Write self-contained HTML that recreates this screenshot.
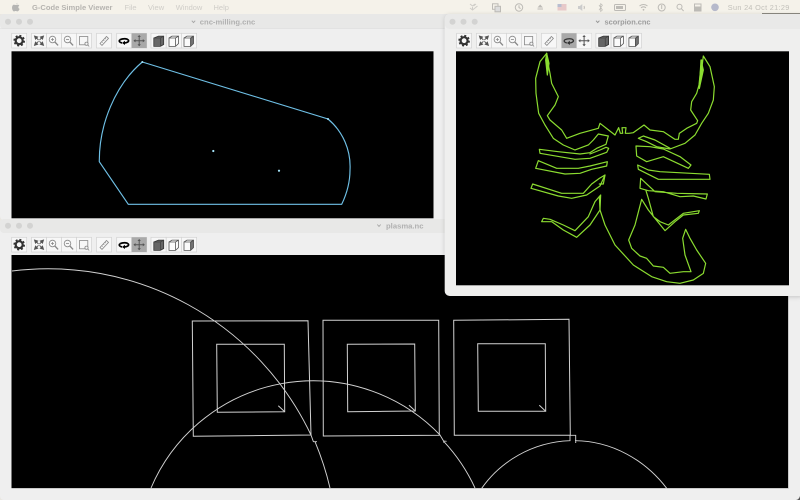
<!DOCTYPE html>
<html><head><meta charset="utf-8"><style>
html,body{margin:0;padding:0;width:800px;height:500px;overflow:hidden;background:#e9e7e2}
svg{position:absolute;left:0;top:0;filter:blur(.35px)}
text{font-family:"Liberation Sans",sans-serif}
</style></head><body>
<svg width="800" height="500" viewBox="0 0 800 500" xmlns="http://www.w3.org/2000/svg">
<defs>
<filter id="sh" x="-5%" y="-5%" width="110%" height="115%"><feDropShadow dx="0" dy="1" stdDeviation="2" flood-color="#000" flood-opacity=".18"/></filter>
<g id="tb">
 <g fill="#f7f7f7" stroke="#d2d2d2" stroke-width=".7">
  <rect x="11.7" y="33.3" width="15" height="14.7"/>
  <rect x="31.5" y="33.3" width="15" height="14.7"/><rect x="46.5" y="33.3" width="15" height="14.7"/><rect x="61.5" y="33.3" width="15" height="14.7"/><rect x="76.5" y="33.3" width="15" height="14.7"/>
  <rect x="96.5" y="33.3" width="15" height="14.7"/>
  <rect x="116.7" y="33.3" width="15" height="14.7"/><rect x="131.7" y="33.3" width="15" height="14.7"/>
  <rect x="151" y="33.3" width="15.2" height="14.7"/><rect x="166.2" y="33.3" width="15.2" height="14.7"/><rect x="181.4" y="33.3" width="15.2" height="14.7"/>
 </g>
 <circle cx="19.2" cy="40.7" r="3.5" fill="none" stroke="#333" stroke-width="2.2"/>
 <circle cx="19.2" cy="40.7" r="5" fill="none" stroke="#333" stroke-width="1.6" stroke-dasharray="2 1.93"/>
 <g fill="#555" stroke="#555" stroke-width=".9">
  <path d="M34.5 36l3.2 1-2.2 2.2zM43.5 36l-3.2 1 2.2 2.2zM34.5 45.3l3.2-1-2.2-2.2zM43.5 45.3l-3.2-1 2.2-2.2z"/>
  <path d="M36 37.5l2.5 2.5M42 37.5l-2.500 2.500M36 43.800l2.500-2.500M42 43.800l-2.500-2.500" fill="none"/>
 </g>
 <g fill="none" stroke="#888" stroke-width=".8">
  <circle cx="52.5" cy="39.5" r="3.3"/><path d="M54.900 42l3.200 3.400" stroke-width="1.3"/><path d="M51 39.500h3M52.500 38v3"/>
  <circle cx="67.5" cy="39.5" r="3.3"/><path d="M69.900 42l3.200 3.400" stroke-width="1.3"/><path d="M66 39.500h3"/>
  <rect x="79.5" y="36.5" width="8.3" height="8.3"/><circle cx="86.5" cy="43.7" r="1.6" fill="#f7f7f7"/><path d="M87.700 45l1.500 1.400"/>
  <path d="M100 43.500l6.500-7 2 1.900-6.500 7z"/><path d="M101.700 41.700l1 .9M103.300 40l1 .9M105 38.200l1 .9" stroke-width=".6"/>
 </g>
 <use href="#rotB"/>
 <g fill="none" stroke="#333" stroke-width=".8">
  <path d="M153.800 38l4.700-1.900h5.200v8.400l-3.300 1.900h-6.600z" fill="#666"/><path d="M153.800 38h6.600v8.400M160.400 38l3.300-1.900" stroke="#444"/>
  <path d="M169 38l3-1.900h6.500v7.500l-3 2.800H169z" fill="#fbfbfb" stroke="#555"/><path d="M169 38h6.500v8.400M175.500 38l3-1.900" stroke="#555"/>
  <path d="M184 38l3-1.900h6.500v7.500l-3 2.800H184z" fill="#fbfbfb" stroke="#555"/><path d="M184 38h6.500v8.400M190.500 38l3-1.900" stroke="#555"/><path d="M190.800 38.300l2.500-1.700v7l-2.500 2.500z" fill="#777" stroke="#555"/>
 </g>
</g>
<g id="rotB">
 <path d="M120 39.700c3-1.400 7-1.300 8.300.3 1 1.600-1.200 2.800-4.200 3" fill="none" stroke="#000" stroke-width="1.700"/>
 <path d="M120 39.700c-1.500 1.400-.4 2.800 2 3.300" fill="none" stroke="#000" stroke-width="1.700"/>
 <path d="M125 40.800l-3 2.200 3 2z" fill="#000"/>
 <rect x="131.700" y="33.300" width="15" height="14.700" fill="#a9a9a9"/>
 <path d="M139.200 35.500v10.500M134 40.700h10.400" stroke="#555" stroke-width="1"/>
 <path d="M139.200 35l-1.700 2h3.400zM139.200 46.300l-1.700-2h3.400zM133.500 40.700l2-1.700v3.400zM144.800 40.700l-2-1.700v3.400z" fill="#555"/>
</g>
<g id="rotA">
 <rect x="116.700" y="33.300" width="15" height="14.700" fill="#a9a9a9"/>
 <path d="M120 39.700c3-1.400 7-1.300 8.300.3 1 1.600-1.200 2.800-4.200 3M120 39.700c-1.500 1.400-.4 2.800 2 3.300" fill="none" stroke="#333" stroke-width="1.300"/>
 <path d="M125 40.800l-3 2.200 3 2z" fill="#333"/>
 <rect x="131.700" y="33.300" width="15" height="14.700" fill="#f7f7f7"/>
 <path d="M139.200 35.500v10.500M134 40.700h10.400" stroke="#555" stroke-width="1"/>
 <path d="M139.200 35l-1.700 2h3.400zM139.200 46.300l-1.700-2h3.400zM133.500 40.700l2-1.700v3.400zM144.800 40.700l-2-1.700v3.400z" fill="#555"/>
</g>
</defs>

<!-- menu bar -->
<rect width="800" height="14" fill="#f5f2ea"/>
<path d="M16 4.300c.7-.8 1.100-1.100 1.400-1.500.1.700-.5 1.300-1.400 1.500zM13 5c1-.6 1.900 0 2.700 0s1.700-.6 2.800-.1c.4.200.6.400.8.700-1.400.9-1.200 2.700.3 3.300-.4 1.200-1.300 2.500-2.100 2.500-.7 0-1-.4-1.800-.4s-1.100.4-1.800.4C12.500 11.400 11 7 13 5z" fill="#b5b5b3"/>
<g font-size="7.500" fill="#bdbbb6">
 <text x="32" y="10" font-weight="700" fill="#b6b4b0" textLength="80.500" lengthAdjust="spacingAndGlyphs">G-Code Simple Viewer</text>
 <text x="124.500" y="10" fill="#cfcdc8">File</text>
 <text x="148" y="10" fill="#cfcdc8">View</text>
 <text x="175.800" y="10" fill="#cfcdc8" textLength="26.500" lengthAdjust="spacingAndGlyphs">Window</text>
 <text x="213.500" y="10" fill="#cfcdc8">Help</text>
 <text x="727.800" y="9.800" font-size="7.300" fill="#c2c0ba" textLength="61.500">Sun 24 Oct  21:29</text>
</g>
<g fill="none" stroke="#bdbbb6" stroke-width="1">
 <path d="M470 4l2.500 2 2.500-2M472.500 7v3M476 4l-2.500 2M470 8l2.500 2 5-4" stroke="#cfcdc8"/>
 <rect x="492.500" y="3.800" width="5.500" height="5.500"/><rect x="495" y="6.300" width="5.500" height="5.500" fill="#ddd"/>
 <circle cx="519" cy="7.500" r="3.700"/><path d="M519 5.300v2.300l1.600 1"/>
 <path d="M537.500 7.500l2.700-3 2.700 3z" fill="#bdbbb6" stroke="none"/>
 <path d="M537.500 9h5.500"/>
 <path d="M578 6h1.800l2.500-2v7l-2.500-2H578z" fill="#ccc" stroke="none"/><path d="M584 6c.5 1 .5 2 0 3"/>
 <path d="M599 5l3.400 5-1.700 1.500V3.700l1.700 1.500-3.400 5" stroke-width=".7"/>
 <rect x="614.500" y="4.500" width="11" height="6" rx="1"/><rect x="616" y="6" width="7" height="3" fill="#bdbbb6" stroke="none"/>
 <path d="M639.500 6c2.400-2 5.600-2 8 0M641 7.800c1.500-1.200 3.500-1.200 5 0"/><circle cx="643.500" cy="9.800" r=".9" fill="#bdbbb6" stroke="none"/>
 <circle cx="661.700" cy="7.500" r="3.500"/><path d="M661.700 5v4"/>
 <circle cx="679.500" cy="6.800" r="2.500"/><path d="M681.400 8.700l2.200 2.300"/>
 <rect x="694.500" y="4" width="6.500" height="3"/><rect x="694.500" y="8" width="6.500" height="3" fill="#bdbbb6"/>
</g>
<rect x="557.500" y="4" width="9" height="6.500" fill="#e7c9c9"/><rect x="557.500" y="4" width="4" height="3" fill="#b8bdd0"/>
<circle cx="715" cy="7.300" r="3.800" fill="#b6b9cb"/>
<rect x="762" y="13" width="38" height="1.500" fill="#8c8a82"/>

<!-- cnc window -->
<rect x="0" y="14" width="450" height="206" rx="4" fill="#efefef"/>
<rect x="0" y="14" width="450" height="15" rx="4" fill="#e8e8e7"/>
<rect x="0" y="28.500" width="450" height=".5" fill="#dcdcdc"/>
<g fill="#d3d3d2"><circle cx="8" cy="21.700" r="3"/><circle cx="19" cy="21.700" r="3"/><circle cx="30" cy="21.700" r="3"/></g>
<path d="M191.800 20.700l1.700 1.900 1.700-1.900" fill="none" stroke="#a5a5a5" stroke-width=".9"/>
<text x="199.800" y="24.500" font-size="7.500" font-weight="700" fill="#b0b0b0" textLength="55.500" lengthAdjust="spacingAndGlyphs">cnc-milling.cnc</text>
<use href="#tb"/>
<rect x="11.500" y="51.300" width="422" height="167" fill="#000"/>
<path d="M142.300 62L328 119A62 62 0 0 1 350 170Q350 187 341.700 204.300H128.300L99.300 161.700C99 125 115 85 142.300 62Z" fill="none" stroke="#6fc0e6" stroke-width="1.150"/>
<g fill="#a5e4fa"><circle cx="213.300" cy="151" r="1.100"/><circle cx="279" cy="170.700" r="1.100"/><circle cx="142.300" cy="62" r="1"/><circle cx="328" cy="119" r="1"/></g>

<!-- plasma window -->
<rect x="0" y="219" width="800" height="281" rx="4" fill="#efefef"/>
<rect x="0" y="219" width="800" height="14" rx="4" fill="#e8e8e7"/>
<g fill="#d3d3d2"><circle cx="8" cy="225.700" r="3"/><circle cx="19" cy="225.700" r="3"/><circle cx="30" cy="225.700" r="3"/></g>
<path d="M377.300 224.500l1.700 1.900 1.700-1.900" fill="none" stroke="#a5a5a5" stroke-width=".9"/>
<text x="386" y="228.300" font-size="7.500" font-weight="700" fill="#b0b0b0" textLength="37.500" lengthAdjust="spacingAndGlyphs">plasma.nc</text>
<use href="#tb" y="204"/>
<rect x="11.500" y="255" width="777" height="233.500" fill="#000"/>
<rect x="11.500" y="488" width="777" height=".7" fill="#b9b9b9"/>
<rect x="788" y="255" width=".7" height="233.500" fill="#b9b9b9"/>
<g fill="none" stroke="#d2d2d2" stroke-width="1">
 <path d="M192.300 321L308 320.700L311 435L193.300 436.300Z"/>
 <path d="M216.700 344.300H284.300L284.700 411.700L217.300 412.300Z"/>
 <path d="M278.300 405.700L284.700 411.700"/>
 <path d="M323 320.300H438.700L439.300 435.300L323.300 436Z"/>
 <path d="M347.300 344.300L414.700 344L415.300 411L347.700 411.700Z"/>
 <path d="M409 405.300L415.300 411"/>
 <path d="M453.700 320.300L569 319.300L570.300 435.300H454.300Z"/>
 <path d="M477.700 343.700H545.300L545.700 411.300H478.300Z"/>
 <path d="M539.300 405.300L545.700 411.300"/>
 <path d="M12 271A291 291 0 0 1 311 435" stroke-width=".95"/>
 <path d="M311 435L313.500 442M313.500 441.700H317M315 441.700A291 291 0 0 1 330 488" stroke-width=".95"/>
 <path d="M151 488A176 176 0 0 1 440 435L444 441.700A176 176 0 0 1 475 488" stroke-width=".95"/>
 <path d="M443.300 442.500l.8-1.500 2.500.3" stroke-width=".8"/>
 <path d="M481.700 488.300C500 462 532 442 570 440.700V435.300H575.700V443M575 440.700C612 441 645 460 666.700 488.300" stroke-width=".95"/>
</g>

<!-- scorpion window -->
<g filter="url(#sh)"><rect x="444.700" y="14" width="360" height="282" rx="5" fill="#efefee"/></g>
<rect x="444.700" y="14" width="360" height="15" rx="5" fill="#e9e9e8"/>
<g fill="#d3d3d2"><circle cx="452.500" cy="21.700" r="3"/><circle cx="463.500" cy="21.700" r="3"/><circle cx="474.700" cy="21.700" r="3"/></g>
<path d="M596 20.700l1.700 1.900 1.700-1.900" fill="none" stroke="#949494" stroke-width=".9"/>
<text x="604.500" y="24.500" font-size="7.500" font-weight="700" fill="#9c9c9c" textLength="46" lengthAdjust="spacingAndGlyphs">scorpion.cnc</text>
<g transform="translate(444.900 0)"><use href="#tb"/><use href="#rotA"/></g>
<rect x="456" y="51.300" width="333" height="234" fill="#000"/>
<g fill="none" stroke="#8bdc30" stroke-linejoin="round" stroke-linecap="round">
 <g transform="translate(500 50) scale(.33333)" stroke-width="3.600">
  <path d="M140 10L120 35L107 85L108 130L116 190L135 225L160 265L190 285L225 300L265 285L280 270L295 252L325 258L318 283L290 295L270 308L240 312L175 305L118 298L120 310L225 328L270 325L320 307L326 295L318 292L300 300L270 312"/>
  <path d="M140 10L142 30L150 70L155 100L175 140L165 165L142 197L150 210L185 240L200 265L240 250L295 235L300 220L345 255L356 233L361 250L368 250L366 233L378 233L376 250L387 250L400 248L432 225L450 240L490 245L525 268L535 268L538 250L560 235L590 220L593 212L572 180L575 155L590 130L597 105L605 30L598 115L610 18L630 50L643 110L640 150L625 190L605 220L585 255L555 280L510 297L470 290L440 275L415 265L430 258L465 270L510 295"/>
  <path d="M140 10L137 30L142 75L147 40Z" fill="#8bdc30"/>
  <path d="M603 30L598 115L610 60Z" fill="#8bdc30"/>
  <path d="M408 288L410 318L440 335L490 320L565 355L573 345L540 320L490 297L450 290Z"/>
  <path d="M115 332L107 355L195 372L240 370L275 358L320 348L322 335L270 348L235 355L170 355Z"/>
 </g>
 <g transform="translate(520 160) scale(.33333)" stroke-width="3.600">
  <path d="M353 15L355 28L415 58L570 58L568 43L420 35L385 30Z"/>
  <path d="M38 72L33 85L115 108L155 115L200 105L240 78L255 45L238 55L215 72L190 100L125 100Z"/>
  <path d="M70 175L65 185L95 185L130 210L170 232L210 195L240 150L242 105L225 125L205 170L165 212L130 195L90 178Z"/>
  <path d="M238 110L240 150L255 195L285 255L340 315L395 350L440 365L480 370L520 360L550 340L557 310L530 270L510 235L497 208L488 235L495 285L513 335L490 335L450 340L430 322L400 318L380 295L360 288L335 265L326 240L345 195L365 118L385 150L405 175L435 212L465 185L490 165L535 160L538 152L490 160L445 195L420 185L400 170L385 115L378 92"/>
  <path d="M362 55L405 95L470 100L562 102L558 117L520 108L480 110L430 95L385 92L360 85Z"/>
  <path d="M238 72L250 72L255 45"/>
 </g>
</g>
<path d="M796 500q3-.5 4-4v4z" fill="#555"/>
</svg>
</body></html>
